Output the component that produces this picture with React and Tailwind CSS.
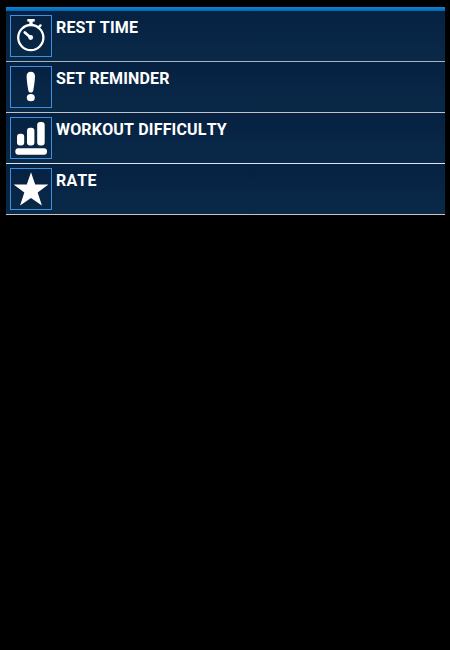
import React from 'react';

const StopwatchIcon = () => (
    <svg viewBox="1 1 40 40" className="w-full h-full" fill="none" stroke="#fff">
        <circle cx="20.8" cy="22.6" r="12.6" strokeWidth="2.3" />
        <path d="M17.3 5.3h7.4" strokeWidth="2.6" />
        <path d="M21 6v4" strokeWidth="3.4" />
        <path d="M28.6 12.4l1.900-2" strokeWidth="2.4" strokeLinecap="round" />
        <path d="M14.8 17.4l5.800 5" strokeWidth="2.7" strokeLinecap="round" />
        <circle cx="20.7" cy="22.5" r="2.4" fill="#fff" stroke="none" />
    </svg>
);

const ReminderIcon = () => (
    <svg viewBox="1 1 40 40" className="w-full h-full" fill="#fff">
        <path d="M20.8 5.8c2.7 0 4.3 1.7 4.2 4.6-.2 5-1 10-1.7 14-.3 1.4-1.1 2.1-2.5 2.1s-2.2-.7-2.5-2.1c-.7-4-1.5-9-1.7-14-.1-2.9 1.5-4.6 4.2-4.6z" />
        <ellipse cx="20.8" cy="31.7" rx="4" ry="3.6" />
    </svg>
);

const DifficultyIcon = () => (
    <svg viewBox="1 1 40 40" className="w-full h-full" fill="#fff">
        <rect x="7" y="16.7" width="7.2" height="11.8" rx="3" />
        <rect x="17" y="10.7" width="7.4" height="17.8" rx="3" />
        <rect x="27.2" y="5" width="7.5" height="23.5" rx="3" />
        <rect x="5.3" y="31.2" width="31.7" height="6.5" rx="3" />
    </svg>
);

const StarIcon = () => (
    <svg viewBox="1 1 40 40" className="w-full h-full" fill="#fff">
        <path d="M21 4.3L25.2 16.6H38.4L27.7 24.6L31.9 37.5L21 30L10.1 37.5L14.3 24.6L3.6 16.6H16.8Z" />
    </svg>
);

const settings = [
    { title: 'REST TIME', Icon: StopwatchIcon, border: 'border-[#a4b4c0]' },
    { title: 'SET REMINDER', Icon: ReminderIcon, border: 'border-[#c0c4c6]' },
    { title: 'WORKOUT DIFFICULTY', Icon: DifficultyIcon, border: 'border-[#dce6f0]' },
    { title: 'RATE', Icon: StarIcon, border: 'border-[#c4c4c4]' },
];

const App = () => {
    return (
        <div className="min-h-screen bg-black pt-[7px] pl-[6px] pr-[5px] font-['Roboto',sans-serif]">
            <div className="h-1 bg-linear-to-b from-[#0b86dc] to-[#0468ae]" />
            <ul>
                {settings.map(({ title, Icon, border }) => (
                    <li
                        key={title}
                        className={`flex h-[51px] gap-1 border-b bg-linear-to-b from-[#062142] to-[#0a2947] p-1 ${border}`}
                    >
                        <div className="size-[42px] shrink-0 border border-[#3f8ee0]">
                            <Icon />
                        </div>
                        <span className="pt-[3px] text-base leading-[19px] font-bold tracking-[0.17px] text-white [font-kerning:none]">
                            {title}
                        </span>
                    </li>
                ))}
            </ul>
        </div>
    );
};

export default App;
